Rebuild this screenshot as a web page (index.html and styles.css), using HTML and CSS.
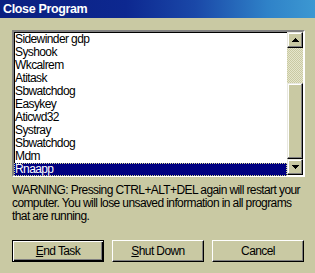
FILE: index.html
```
<!DOCTYPE html>
<html>
<head>
<meta charset="utf-8">
<link rel="stylesheet" href="styles.css">
</head>
<body>
<div class="window">
  <div class="titlebar">Close Program</div>
  <div class="content">
    <div class="listbox">
      <ul class="items">
        <li>Sidewinder gdp</li>
        <li>Syshook</li>
        <li>Wkcalrem</li>
        <li>Atitask</li>
        <li>Sbwatchdog</li>
        <li>Easykey</li>
        <li>Aticwd32</li>
        <li>Systray</li>
        <li>Sbwatchdog</li>
        <li>Mdm</li>
        <li class="selected"><span>Rnaapp</span></li>
      </ul>
      <div class="scrollbar">
        <div class="sb-btn">
          <svg width="7" height="4" viewBox="0 0 7 4"><path d="M3 0h1v1h1v1h1v1h1v1H0V3h1V2h1V1h1z" fill="#000"/></svg>
        </div>
        <div class="track"></div>
        <div class="thumb"></div>
        <div class="sb-btn">
          <svg width="7" height="4" viewBox="0 0 7 4"><path d="M0 0h7v1H6v1H5v1H4v1H3V3H2V2H1V1H0z" fill="#000"/></svg>
        </div>
      </div>
    </div>
    <p class="warning">WARNING: Pressing CTRL+ALT+DEL again will restart your<br>computer. You will lose unsaved information in all programs<br>that are running.</p>
    <div class="buttons">
      <button class="btn default"><u>E</u>nd Task</button>
      <button class="btn"><u>S</u>hut Down</button>
      <button class="btn">Cancel</button>
    </div>
  </div>
</div>
</body>
</html>
```
FILE: styles.css
```
html, body {
  margin: 0;
  padding: 0;
}
body {
  width: 315px;
  height: 273px;
  overflow: hidden;
  font-family: "Liberation Sans", Arial, sans-serif;
}
.window {
  width: 315px;
  height: 273px;
  background-color: #c9c9a3;
  display: flex;
  flex-direction: column;
}
.titlebar {
  height: 18px;
  line-height: 18px;
  padding-left: 3px;
  color: #fff;
  font-weight: bold;
  font-size: 12.5px;
  letter-spacing: -0.35px;
  background: linear-gradient(to right, #0a1f80 0%, #0d2890 40%, #1a48a8 62%, #2f82c8 85%, #3c98d2 100%);
}
.content {
  flex: 1;
  padding: 12px 10px 11px 12px;
  display: flex;
  flex-direction: column;
}
.listbox {
  width: 289px;
  height: 143px;
  border: 2px solid;
  border-color: #808080 #ffffff #ffffff #808080;
  box-shadow: inset 1px 1px 0 #000;
  background: #fff;
  display: flex;
}
.items {
  list-style: none;
  margin: 0;
  padding: 1px 0 0 0;
  flex: 1;
  font-size: 12px;
  letter-spacing: -0.6px;
  color: #000;
}
.items li {
  height: 13px;
  line-height: 13px;
  padding-left: 1px;
  white-space: nowrap;
}
.items li.selected {
  background: #000080;
  color: #fff;
  outline: 1px dotted #d8d890;
  outline-offset: -1px;
}
.scrollbar {
  width: 16px;
  display: flex;
  flex-direction: column;
}
.sb-btn {
  height: 16px;
  box-sizing: border-box;
  border: 1px solid;
  border-color: #e8e8e0 #000 #000 #e8e8e0;
  box-shadow: inset -1px -1px 0 #808080, inset 1px 1px 0 #fff;
  background-color: #c9c9a3;
  display: flex;
  align-items: center;
  justify-content: center;
}
.track {
  height: 35px;
  background-color: #e6e6cc;
  background-image: conic-gradient(#c9c9a3 0 25%, transparent 0 50%, #c9c9a3 0 75%, transparent 0);
  background-size: 2px 2px;
}
.thumb {
  height: 76px;
  box-sizing: border-box;
  border: 1px solid;
  border-color: #e8e8e0 #000 #000 #e8e8e0;
  box-shadow: inset -1px -1px 0 #808080, inset 1px 1px 0 #fff;
  background-color: #c9c9a3;
}
.warning {
  margin: 7px 0 0 0;
  font-size: 12px;
  line-height: 13px;
  letter-spacing: -0.6px;
  color: #000;
  white-space: nowrap;
}
.buttons {
  margin-top: auto;
  display: flex;
  gap: 8px;
}
.btn {
  width: 92px;
  height: 22px;
  box-sizing: border-box;
  font-family: "Liberation Sans", Arial, sans-serif;
  font-size: 12px;
  letter-spacing: -0.6px;
  color: #000;
  padding: 0;
  border: 1px solid;
  border-color: #fff #000 #000 #fff;
  box-shadow: inset -1px -1px 0 #808080;
  background-color: #c9c9a3;
}
.btn.default {
  border: 1px solid #000;
  box-shadow: inset 1px 1px 0 #fff, inset -1px -1px 0 #000, inset -2px -2px 0 #808080;
}
```
